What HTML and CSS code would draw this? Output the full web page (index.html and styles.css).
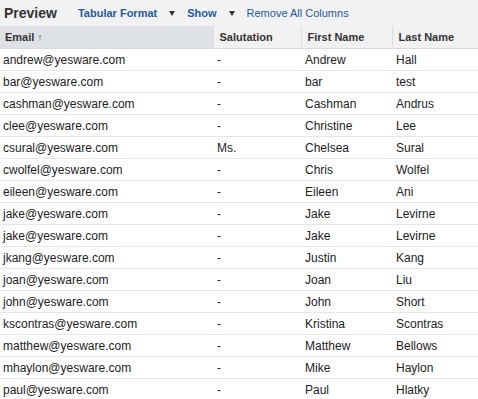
FILE: index.html
```html
<!DOCTYPE html>
<html>
<head>
	<title>Preview</title>
	<link rel="stylesheet" href="styles.css">
</head>
<body>
	<div class="toolbar">
		<span class="title">Preview</span>
		<a class="menu bold">Tabular Format</a><span class="caret"></span>
		<a class="menu bold">Show</a><span class="caret"></span>
		<a class="menu">Remove All Columns</a>
	</div>
	<table class="grid">
		<colgroup>
			<col class="c-email">
			<col class="c-sal">
			<col class="c-first">
			<col class="c-last">
		</colgroup>
		<thead>
			<tr>
				<th class="sorted">Email <span class="arrow">&uarr;</span></th>
				<th>Salutation</th>
				<th>First Name</th>
				<th>Last Name</th>
			</tr>
		</thead>
		<tbody>
			<tr><td>andrew@yesware.com</td><td>-</td><td>Andrew</td><td>Hall</td></tr>
			<tr><td>bar@yesware.com</td><td>-</td><td>bar</td><td>test</td></tr>
			<tr><td>cashman@yesware.com</td><td>-</td><td>Cashman</td><td>Andrus</td></tr>
			<tr><td>clee@yesware.com</td><td>-</td><td>Christine</td><td>Lee</td></tr>
			<tr><td>csural@yesware.com</td><td>Ms.</td><td>Chelsea</td><td>Sural</td></tr>
			<tr><td>cwolfel@yesware.com</td><td>-</td><td>Chris</td><td>Wolfel</td></tr>
			<tr><td>eileen@yesware.com</td><td>-</td><td>Eileen</td><td>Ani</td></tr>
			<tr><td>jake@yesware.com</td><td>-</td><td>Jake</td><td>Levirne</td></tr>
			<tr><td>jake@yesware.com</td><td>-</td><td>Jake</td><td>Levirne</td></tr>
			<tr><td>jkang@yesware.com</td><td>-</td><td>Justin</td><td>Kang</td></tr>
			<tr><td>joan@yesware.com</td><td>-</td><td>Joan</td><td>Liu</td></tr>
			<tr><td>john@yesware.com</td><td>-</td><td>John</td><td>Short</td></tr>
			<tr><td>kscontras@yesware.com</td><td>-</td><td>Kristina</td><td>Scontras</td></tr>
			<tr><td>matthew@yesware.com</td><td>-</td><td>Matthew</td><td>Bellows</td></tr>
			<tr><td>mhaylon@yesware.com</td><td>-</td><td>Mike</td><td>Haylon</td></tr>
			<tr><td>paul@yesware.com</td><td>-</td><td>Paul</td><td>Hlatky</td></tr>
		</tbody>
	</table>
</body>
</html>
```

FILE: styles.css
```css
body {
	margin: 0;
	font-family: 'Liberation Sans', Arial, sans-serif;
	color: #222;
	background-color: #fff;
}
.toolbar {
	display: flex;
	align-items: center;
	height: 26px;
	padding-left: 4px;
	background-color: #f2f2f2;
}
.title {
	font-size: 14px;
	font-weight: bold;
	color: #333;
	margin-right: 21px;
}
.menu {
	font-size: 11px;
	color: #1d5ba6;
	cursor: pointer;
}
.menu.bold {
	font-weight: bold;
}
.caret {
	width: 0;
	height: 0;
	border-left: 3px solid transparent;
	border-right: 3px solid transparent;
	border-top: 5px solid #333;
	margin: 0 12px 0 12px;
}
.grid {
	width: 478px;
	border-collapse: collapse;
	table-layout: fixed;
	font-size: 12px;
}
.c-email { width: 213px; }
.c-sal { width: 88px; }
.c-first { width: 91px; }
.c-last { width: 86px; }
.grid th {
	height: 22px;
	padding: 0 0 0 6px;
	text-align: left;
	font-size: 11px;
	font-weight: bold;
	color: #333;
	background-color: #f1f1f1;
	border-left: 1px solid #dcdcdc;
	border-bottom: 1px solid #dadada;
}
.grid th.sorted {
	padding-left: 5px;
	background-color: #dfe2e5;
	border-left: none;
}
.arrow {
	font-size: 10px;
	font-weight: bold;
	color: #333;
}
.grid td {
	height: 21px;
	padding: 0 0 0 4px;
	border-bottom: 1px solid #e6e6e6;
	white-space: nowrap;
}
.grid td:first-child {
	padding-left: 3px;
}
```
